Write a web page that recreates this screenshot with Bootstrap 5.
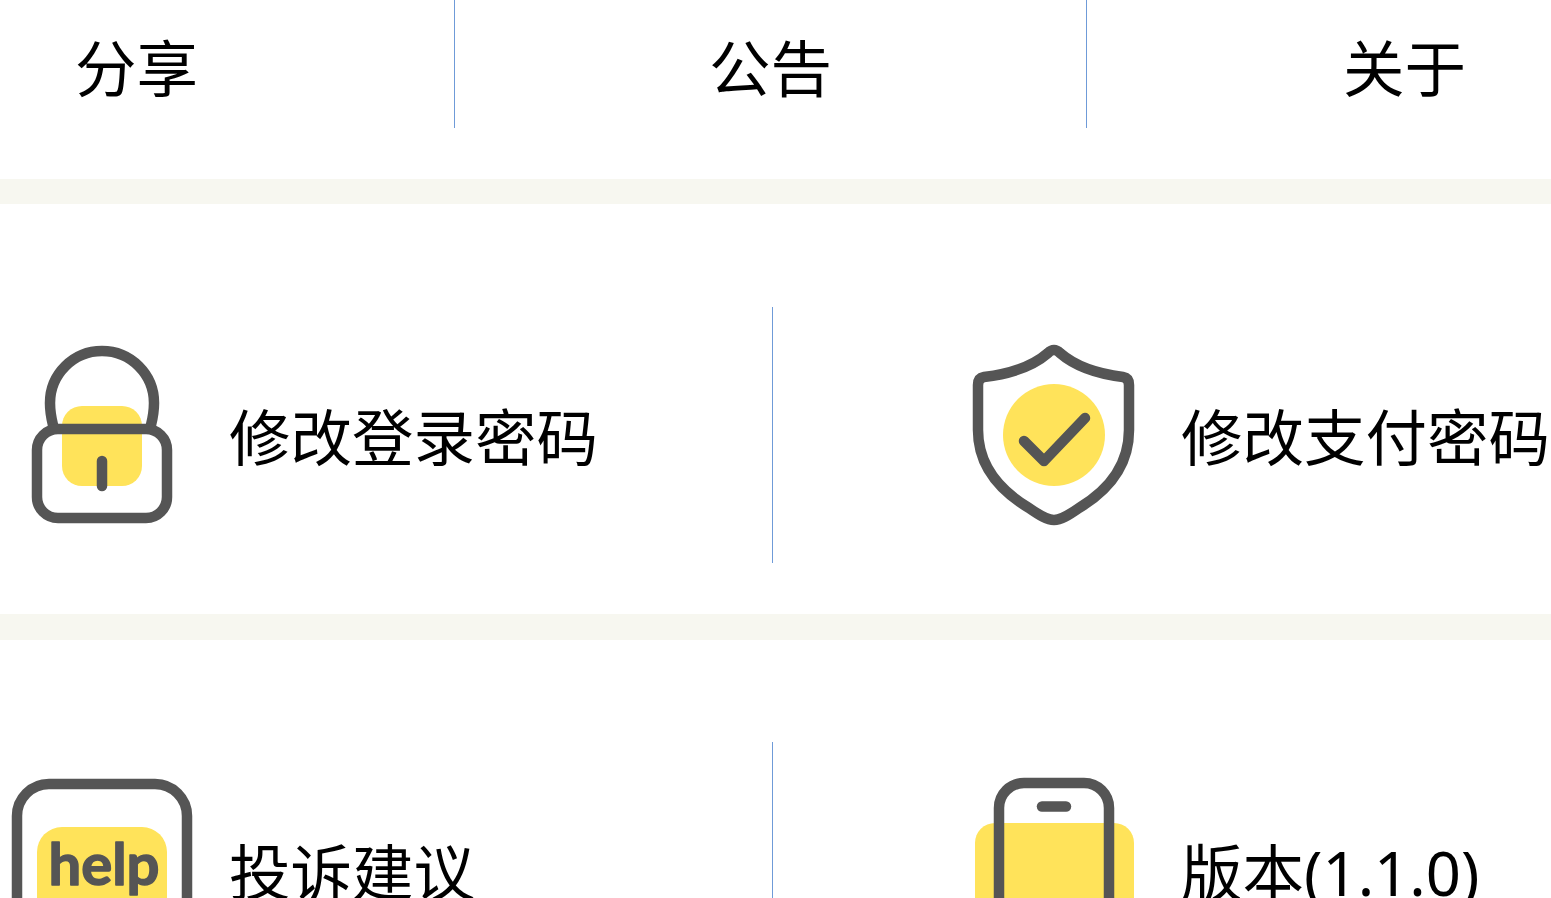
<!DOCTYPE html>
<html lang="zh-CN">
<head>
<meta charset="utf-8">
<title>设置</title>
<link rel="stylesheet" href="https://cdn.jsdelivr.net/npm/bootstrap@5.3.0/dist/css/bootstrap.min.css">
<style>
html,body{height:898px;overflow:hidden;background:#fff}
body{font-family:"Noto Sans","Noto Sans CJK SC",sans-serif;font-size:61.5px;color:#000;line-height:1;font-weight:400}
.top-bar{height:128px;margin-bottom:51px}
.top-cell{border-right:1px solid #6f9bd8}
.top-a,.top-b,.top-c{padding-top:10px}
.top-a{width:455px;padding-left:75px}
.top-b{width:632px}
.top-c{flex:1;padding-right:85px}
.band{height:25px;background:#f7f7f0}
.band-b{height:26px}
.menu-row{padding-top:103px;padding-bottom:51px;height:410px}
.menu-last{height:auto;padding-top:102px;padding-bottom:0}
.menu-cell{height:256px}
.menu-left{flex:0 0 773px;padding-left:12px;border-right:1px solid #6f9bd8}
.menu-right{flex:1 1 0;min-width:0;padding-left:191px}
.ico{width:180px;height:180px;flex:none;margin-right:37px;overflow:visible}
.menu-text{white-space:nowrap;position:relative;top:3px}
.s{fill:none;stroke:#555;stroke-width:10.500;stroke-linecap:round;stroke-linejoin:round}
.y{fill:#ffe35a}
.help-word{font-family:"Lato","Liberation Sans",sans-serif;font-weight:700;font-size:58px;fill:#555;stroke:#555;stroke-width:1.500px;stroke-linejoin:round}
</style>
</head>
<body>
<div class="top-bar d-flex">
  <div class="top-cell top-a d-flex align-items-center">分享</div>
  <div class="top-cell top-b d-flex align-items-center justify-content-center">公告</div>
  <div class="top-c d-flex align-items-center justify-content-end">关于</div>
</div>
<div class="band"></div>
<div class="menu-row d-flex">
  <div class="menu-cell menu-left d-flex align-items-center">
    <svg class="ico" viewBox="0 0 180 180">
      <rect class="y" x="50" y="61" width="80" height="80" rx="20"/>
      <path class="s" d="M41 80Q38 68 38 58A52 52 0 0 1 142 58Q142 68 139 80"/>
      <rect class="s" x="25" y="84" width="130" height="89" rx="21"/>
      <path class="s" d="M90 116V141"/>
    </svg>
    <span class="menu-text">修改登录密码</span>
  </div>
  <div class="menu-cell menu-right d-flex align-items-center">
    <svg class="ico" viewBox="0 0 180 180">
      <circle class="y" cx="90" cy="90" r="51"/>
      <path class="s" d="M84 8Q90 2 96 8C112 22 135 29 159 32Q165 33 165 40V85C165 120 145 145 115 163C105 170 97 175 90 175C83 175 75 170 65 163C35 145 14 120 14 85V40Q14 33 20 32C45 29 68 22 84 8Z"/>
      <path class="s" d="M60 96L80 116L121 73"/>
    </svg>
    <span class="menu-text">修改支付密码</span>
  </div>
</div>
<div class="band band-b"></div>
<div class="menu-row menu-last d-flex">
  <div class="menu-cell menu-left d-flex align-items-center">
    <svg class="ico" viewBox="0 0 180 180">
      <rect class="s" x="5" y="4" width="170" height="170" rx="32"/>
      <rect class="y" x="25" y="47" width="130" height="120" rx="25"/>
      <text class="help-word" x="92" y="105" text-anchor="middle">help</text>
    </svg>
    <span class="menu-text">投诉建议</span>
  </div>
  <div class="menu-cell menu-right d-flex align-items-center">
    <svg class="ico" viewBox="0 0 180 180">
      <rect class="y" x="11" y="43" width="159" height="120" rx="20"/>
      <rect class="s" x="35" y="3" width="110" height="174" rx="25"/>
      <path class="s" d="M78 26.500H102"/>
    </svg>
    <span class="menu-text">版本(1.1.0)</span>
  </div>
</div>
<script src="https://cdn.jsdelivr.net/npm/bootstrap@5.3.0/dist/js/bootstrap.bundle.min.js"></script>
</body>
</html>
